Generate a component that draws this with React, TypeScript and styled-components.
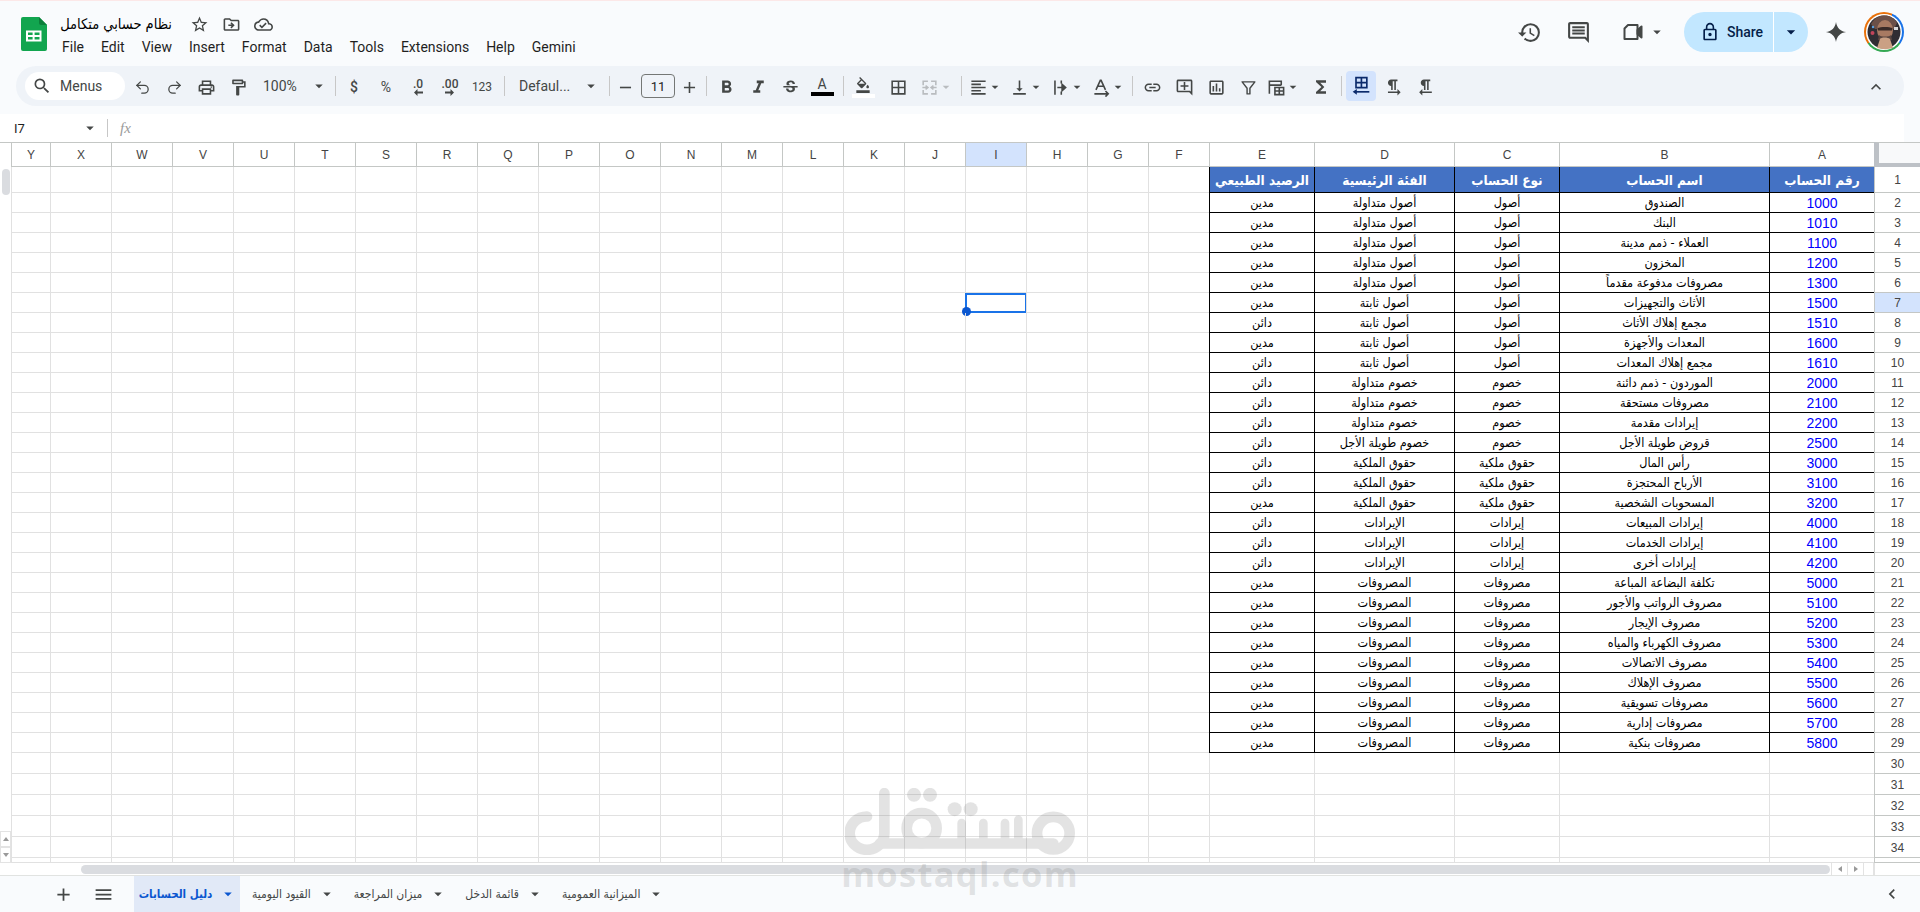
import React from "react";
import styled, { createGlobalStyle } from "styled-components";
import { Redo2, Undo2 } from "lucide-react";
import {
  MdAdd, MdArrowDropDown, MdBorderAll, MdChevronLeft, MdExpandLess, MdFormatAlignLeft, MdFormatBold,
  MdFormatColorFill, MdFormatItalic, MdFormatTextdirectionLToR, MdFormatTextdirectionRToL, MdFunctions,
  MdHistory, MdLink, MdLockOutline, MdMenu, MdOutlineAddComment, MdOutlineCloudDone, MdOutlineComment,
  MdOutlineDriveFileMove, MdOutlineFormatPaint, MdOutlineInsertChart, MdOutlinePrint, MdRemove,
  MdSearch, MdStarBorder, MdStrikethroughS, MdVerticalAlignBottom,
} from "react-icons/md";

const GlobalStyle = createGlobalStyle`
  html, body { margin: 0; padding: 0; height: 912px; overflow: hidden; background: #f9fbfd; }
  body { font-family: Roboto, "Liberation Sans", sans-serif; color: #1f1f1f; }
  * { box-sizing: border-box; }
`;

const ARABIC = `"DejaVu Sans Condensed", "DejaVu Sans", sans-serif`;
const GRID = "#e1e1e1";
const HEAD_LINE = "#c4c7c5";
const ICON = "#444746";

const Page = styled.div`position: relative; width: 1920px; height: 912px; display: flex; flex-direction: column; overflow: hidden;`;

const Header = styled.header`height: 66px; display: flex; border-top: 1px solid #fce8e8; padding: 16px 16px 0 21px;`;
const DocInfo = styled.div`margin-left: 15px; display: flex; flex-direction: column;`;
const TitleRow = styled.div`display: flex; align-items: center; height: 18px; margin-top: -2px;`;
const DocTitle = styled.div`width: 110px; font: 14.5px ${ARABIC}; direction: rtl; white-space: nowrap; color: #000; text-align: right;`;
const TitleIcon = styled.span`width: 32px; display: flex; justify-content: center; color: ${ICON}; font-size: 19px; &:first-of-type { margin-left: 11px; }`;
const MenuBar = styled.nav`display: flex; gap: 17px; margin-top: 4px; font-size: 14px; color: #1f1f1f; line-height: 20px;`;
const HeaderRight = styled.div`margin-left: auto; display: flex; align-items: center; height: 40px; margin-top: -5px;`;
const RoundIcon = styled.span<{ $w?: number; $ml?: number }>`width: ${(p) => p.$w ?? 40}px; margin-left: ${(p) => p.$ml ?? 0}px; display: flex; align-items: center; justify-content: center; color: ${ICON}; font-size: 25px;`;
const VideoGroup = styled.span`width: 70px; display: flex; align-items: center; justify-content: flex-end; gap: 3px; padding-right: 2px; color: ${ICON}; font-size: 18px;`;
const ShareButton = styled.div`width: 124px; height: 40px; margin-left: 16px; border-radius: 20px; background: #c2e7ff; display: flex; align-items: center; color: #041e49; font-size: 14px; font-weight: 500;`;
const ShareMain = styled.div`width: 90px; height: 100%; display: flex; align-items: center; padding-left: 16px; gap: 7px; border-right: 1px solid #fff; svg { font-size: 20px; }`;
const ShareDrop = styled.div`flex: 1; display: flex; justify-content: center; font-size: 20px;`;
const AvatarWrap = styled.div`width: 40px; height: 40px; border-radius: 50%; margin-left: 17px; padding: 2px; background: conic-gradient(#e8710a 0 25deg, #1a73e8 25deg 125deg, #34a853 125deg 235deg, #e8710a 235deg 360deg);`;

const Toolbar = styled.div`height: 40px; margin: 0 16px; padding: 0 12px 0 9px; background: #eff3f8; border-radius: 20px; display: flex; align-items: center; color: ${ICON};`;
const SearchPill = styled.div`width: 100px; height: 28px; background: #fff; border-radius: 14px; display: flex; align-items: center; padding-left: 7px; gap: 8px; font-size: 14px; color: #444746; svg { font-size: 20px; }`;
const Tool = styled.div<{ $w?: number; $ml?: number; $active?: boolean }>`
  width: ${(p) => p.$w ?? 32}px; height: ${(p) => (p.$active ? 30 : 28)}px; margin-left: ${(p) => p.$ml ?? 0}px; margin-top: ${(p) => (p.$active ? 0 : 2)}px; flex: none;
  display: flex; align-items: center; justify-content: center; font-size: 19px; color: ${(p) => (p.$active ? "#0b2a6b" : ICON)};
  background: ${(p) => (p.$active ? "#d3e3fd" : "transparent")}; border-radius: 4px;
`;
const ToolGroup = styled.div<{ $pl?: number }>`width: 41px; flex: none; margin-top: 2px; display: flex; align-items: center; padding-left: ${(p) => p.$pl ?? 3}px; font-size: 19px; color: ${ICON}; svg + svg { font-size: 16px; margin-left: -1px; }`;
const Sep = styled.div<{ $l: number; $r: number }>`width: 1px; height: 20px; flex: none; background: #c7c7c7; margin: 0 ${(p) => p.$r}px 0 ${(p) => p.$l}px;`;
const SelectTool = styled.div<{ $w: number }>`width: ${(p) => p.$w}px; flex: none; display: flex; align-items: center; justify-content: space-between; padding: 0 3px 0 9px; font-size: 14px; svg { font-size: 18px; flex: none; }`;
const SymbolText = styled.span<{ $s?: number; $b?: boolean }>`font-size: ${(p) => p.$s ?? 13}px; font-weight: ${(p) => (p.$b ? 500 : 400)}; color: ${ICON};`;
const SizeBox = styled.div`width: 34px; height: 24px; flex: none; border: 1px solid #747775; border-radius: 4px; display: flex; align-items: center; justify-content: center; font-size: 13px; color: #1f1f1f;`;
const StackIcon = styled.div`display: flex; flex-direction: column; align-items: center; line-height: 10px; font-size: 12px; font-weight: 500; color: ${ICON};`;
const ColorBar = styled.div<{ $c: string }>`width: 23px; height: 4px; background: ${(p) => p.$c}; margin-top: 1px;`;
const ColorTool = styled.div`display: flex; flex-direction: column; align-items: center; font-size: 14px; line-height: 13px; color: ${ICON};`;
const Caret = styled(Tool)`margin-left: auto; font-size: 20px;`;

const FormulaWrap = styled.div`height: 36px; padding: 8px 16px 0 0;`;
const FormulaBar = styled.div`height: 28px; background: #fff; display: flex; align-items: center; color: #444746;`;
const CellName = styled.div`width: 107px; padding-left: 14px; display: flex; align-items: center; justify-content: space-between; padding-right: 8px; font-size: 13px; color: #1f1f1f; svg { font-size: 18px; color: ${ICON}; }`;
const FormulaDivider = styled.div`width: 1px; height: 18px; background: #c7c7c7;`;
const Fx = styled.div`margin-left: 12px; font: italic 15px "Liberation Serif", serif; color: #9a9a9a;`;

const SheetArea = styled.div`height: 721px; display: flex; background: #fff;`;
const VScroll = styled.div`width: 11px; flex: none; display: flex; flex-direction: column; align-items: center; border-top: 1px solid ${HEAD_LINE};`;
const VThumb = styled.div`width: 8px; height: 26px; margin-top: 26px; background: #dadce0; border-radius: 4px;`;
const VArrow = styled.div<{ $top?: boolean }>`
  width: 11px; height: 16px; border: 1px solid #e3e3e3; display: flex; align-items: center; justify-content: center; margin-top: ${(p) => (p.$top ? "auto" : "0")};
  &::before { content: ""; border: 3px solid transparent; ${(p) => (p.$top ? "border-bottom: 4px solid #9a9a9a; margin-top: -3px;" : "border-top: 4px solid #9a9a9a; margin-top: 3px;")} }
`;
const Grid = styled.div`width: 1909px; display: flex; flex-direction: column;`;
const TEMPLATE = `39px repeat(19, 61px) 105px 140px 105px 210px 105px 46px`;
const Row = styled.div<{ $h: number }>`display: grid; grid-template-columns: ${TEMPLATE}; height: ${(p) => p.$h}px; flex: none;`;
const ColHead = styled.div<{ $sel?: boolean }>`
  display: flex; align-items: center; justify-content: center; font: 12px "Liberation Sans", sans-serif; color: #444;
  background: ${(p) => (p.$sel ? "#d3e3fd" : "#fff")}; border-top: 1px solid ${HEAD_LINE}; border-left: 1px solid ${HEAD_LINE}; border-bottom: 1px solid ${HEAD_LINE};
`;
const Corner = styled.div`background: #f8f9fa; border-left: 5px solid #bdc1c6; border-bottom: 4px solid #bdc1c6; border-top: 1px solid ${HEAD_LINE};`;
const RowHead = styled.div<{ $sel?: boolean }>`
  display: flex; align-items: center; justify-content: center; font: 12px "Liberation Sans", sans-serif; color: #444; padding-top: 1px;
  background: ${(p) => (p.$sel ? "#d3e3fd" : "#fff")}; border-left: 1px solid ${HEAD_LINE}; border-bottom: 1px solid ${HEAD_LINE};
`;
const Cell = styled.div`position: relative; border-left: 1px solid ${GRID}; border-bottom: 1px solid ${GRID};`;
const TableCell = styled.div`
  display: flex; align-items: center; justify-content: center; direction: rtl; white-space: nowrap; overflow: hidden;
  font: 12.5px ${ARABIC}; color: #000; border-left: 1px solid #000; border-bottom: 1px solid #000;
`;
const TableHead = styled(TableCell)`background: #4472c4; color: #fff; font-weight: 700; font-size: 13.5px;`;
const AccountNo = styled(TableCell)`font: 14px "Liberation Sans", sans-serif; color: #0000ff; direction: ltr;`;
const Selection = styled.div`position: absolute; inset: 0 -1px -1px -1px; border: 2px solid #1a73e8; pointer-events: none;
  &::after { content: ""; position: absolute; left: -5px; bottom: -5px; width: 9px; height: 9px; border-radius: 50%; background: #0b57d0; }
`;

const HScrollRow = styled.div`height: 12px; display: flex; align-items: center; background: #fff; padding-left: 81px;`;
const HThumb = styled.div`width: 1749px; height: 9px; background: #dadce0; border-radius: 5px;`;
const HArrows = styled.div`margin-left: 1px; width: 34px; display: flex; height: 12px; border-left: 1px solid #e3e3e3;`;
const HArrow = styled.div<{ $left?: boolean }>`
  width: 16px; display: flex; align-items: center; justify-content: center; border-right: 1px solid #e3e3e3;
  &::before { content: ""; border: 3px solid transparent; ${(p) => (p.$left ? "border-right: 4px solid #9a9a9a; margin-left: -3px;" : "border-left: 4px solid #9a9a9a; margin-left: 3px;")} }
`;
const HEnd = styled.div`margin-left: 8px; width: 2px; height: 12px; background: #e3e3e3;`;

const TabBar = styled.div`height: 37px; display: flex; align-items: stretch; background: #f9fbfd; border-top: 1px solid #e1e3e1; padding-left: 43px; color: ${ICON};`;
const BarIcon = styled.div`width: 40px; display: flex; align-items: center; justify-content: center; font-size: 21px; color: #444746;`;
const TabGap = styled.div`width: 11px;`;
const Tab = styled.div<{ $active?: boolean }>`
  display: flex; align-items: center; justify-content: center; gap: 7px; flex: none; width: ${(p) => (p.$active ? "106px" : "auto")}; padding: 0 6px 0 ${(p) => (p.$active ? 8 : 12)}px;
  background: ${(p) => (p.$active ? "#e1e9f7" : "transparent")}; color: ${(p) => (p.$active ? "#0b57d0" : "#444746")};
  font: ${(p) => (p.$active ? 700 : 400)} ${(p) => (p.$active ? 11.5 : 12)}px ${ARABIC}; white-space: nowrap; svg { font-size: 18px; flex: none; }
`;
const TabLabel = styled.span`direction: rtl;`;
const Collapse = styled.div`margin-left: auto; width: 56px; display: flex; align-items: center; justify-content: center; font-size: 20px; color: #444746;`;

const Watermark = styled.div`position: absolute; left: 845px; top: 788px; width: 230px; display: flex; flex-direction: column; align-items: center; pointer-events: none;`;
const WatermarkText = styled.div`font: 700 34.5px/34px "Open Sans", sans-serif; letter-spacing: 1.3px; color: rgba(120, 120, 120, 0.2); margin-top: 2px; white-space: nowrap;`;

const SheetsLogo = () => (
  <svg width="26" height="34" viewBox="0 0 26 34" style={{ flex: "none" }}>
    <path d="M2 0h16l8 8v24a2 2 0 0 1-2 2H2a2 2 0 0 1-2-2V2a2 2 0 0 1 2-2z" fill="#12a54f" />
    <path d="M18 0l8 8h-6a2 2 0 0 1-2-2z" fill="#0b7f3a" />
    <path d="M5 13.500h15.500v11H5z" fill="#fff" />
    <path d="M7 15.500h4.600v2.600H7zM13.600 15.500h4.900v2.600h-4.900zM7 20h4.600v2.600H7zM13.600 20h4.900v2.600h-4.900z" fill="#12a54f" />
  </svg>
);

const Gemini = () => (
  <svg width="22" height="22" viewBox="0 0 24 24" style={{ marginLeft: 17, flex: "none" }}>
    <path d="M12 1c.8 6.2 4.8 10.200 11 11-6.200.8-10.200 4.800-11 11-.8-6.200-4.800-10.200-11-11 6.200-.8 10.200-4.800 11-11z" fill="#444746" />
  </svg>
);

const Avatar = () => (
  <svg width="36" height="36" viewBox="0 0 36 36" style={{ display: "block" }}>
    <circle cx="18" cy="18" r="18" fill="#fff" />
    <circle cx="18" cy="18" r="16.500" fill="#2f2d33" />
    <path d="M5 10C9 3 14 1.500 19 1.500S28 4 31 9l-3 6H9z" fill="#6b5048" />
    <ellipse cx="19" cy="16" rx="8" ry="10" fill="#a87a62" />
    <path d="M11.500 14c3-1.500 12-1.500 15 0l-.5 2.500h-14z" fill="#3a2b28" />
    <path d="M13 21c2 2 10 2 12 0l1 5H12z" fill="#5a4640" />
    <path d="M11 34l3-9c1-2 8-2 10 0l3 9c-5 1.500-11 1.500-16 0z" fill="#caa084" />
    <circle cx="6.500" cy="19" r="2" fill="#c2445a" />
    <circle cx="7" cy="13" r="1.200" fill="#5aa0e0" />
    <path d="M28 13h4v3h-4z" fill="#d8d8d8" />
  </svg>
);

const Video = () => (
  <svg width="24" height="24" viewBox="0 0 24 24" fill="none" stroke="#444746" strokeWidth="2" strokeLinejoin="round">
    <path d="M7 5h9.500v14H3.500V8.500z" />
    <path d="M16.500 10l4-3.500v11l-4-3.500z" fill="#444746" />
  </svg>
);

const Merge = () => (
  <svg width="19" height="19" viewBox="0 0 24 24" fill="none" stroke="#b9bcbf" strokeWidth="2">
    <path d="M4 9V4h6M20 9V4h-6M4 15v5h6M20 15v5h-6M3 12h6M21 12h-6" />
    <path d="M7 9.500L10 12l-3 2.500M17 9.500L14 12l3 2.500" />
  </svg>
);

const Wrap = () => (
  <svg width="19" height="19" viewBox="0 0 24 24" fill="none" stroke="#444746" strokeWidth="2">
    <path d="M5 3v18M13 3v4M13 17v4M8 12h9" />
    <path d="M14 8l4.500 4-4.500 4z" fill="#444746" />
  </svg>
);

const Rotate = () => (
  <svg width="19" height="19" viewBox="0 0 24 24" fill="none" stroke="#444746" strokeWidth="2">
    <path d="M5 15L10.500 3h1L17 15M7 10.500h8M3 20h17M17 16.500l3.500 3.500-3.500 3.500" />
  </svg>
);

const Filter = () => (
  <svg width="17" height="17" viewBox="0 0 24 24" fill="none" stroke="#444746" strokeWidth="2" strokeLinejoin="round">
    <path d="M3 4h18l-7 9v8h-4v-8z" />
  </svg>
);

const TableIcon = () => (
  <svg width="19" height="19" viewBox="0 0 24 24" fill="none" stroke="#444746" strokeWidth="2">
    <path d="M3 20V4h15v5M3 9h15" />
    <path d="M10 12h11v9H10zM15.500 12v9M10 16.500h11" />
  </svg>
);

const RtlGrid = () => (
  <svg width="20" height="20" viewBox="0 0 24 24" fill="none" stroke="#0b2a6b" strokeWidth="2">
    <path d="M6 2h13v12H6zM12.500 2v12M6 8h13" />
    <path d="M22 19H5" />
    <path d="M7 15.500v7L2 19z" fill="#0b2a6b" stroke="none" />
  </svg>
);

const SmallArrow = ({ left }: { left?: boolean }) => (
  <svg width="9" height="7" viewBox="0 0 9 7" fill="#444746">
    {left ? <path d="M0 3.500L3.500 0v2.500H9v2H3.500V7z" /> : <path d="M9 3.500L5.500 0v2.500H0v2h5.500V7z" />}
  </svg>
);

const LogoMark = () => (
  <svg width="230" height="67" viewBox="195 145 690 200" role="img" aria-label="mostaql" opacity="0.2">
    <g fill="none" stroke="#787878" strokeWidth="32" strokeLinecap="round" strokeLinejoin="round">
      <path d="M313 160V280a52 50 0 0 1-104 0a52 50 0 0 1 52-50" />
      <circle cx="425" cy="265" r="45" />
      <path d="M300 311H820" />
      <path d="M545 250v60M610 250v60M675 250v60M715 240v70" strokeWidth="26" />
      <circle cx="820" cy="280" r="49" />
    </g>
    <g fill="#787878">
      <circle cx="402" cy="165" r="21" />
      <circle cx="450" cy="165" r="21" />
      <circle cx="524" cy="208" r="21" />
      <circle cx="572" cy="208" r="21" />
    </g>
  </svg>
);

const COLS = "YXWVUTSRQPONMLKJIHGFEDCBA".split("");
const BLANK_COLS = 20;
const SEL_COL = 16;

type Account = [string, string, string, string, string];
const ASSET_C = "أصول متداولة";
const ASSET_F = "أصول ثابتة";
const LIAB_C = "خصوم متداولة";
const EQ = "حقوق الملكية";
const REV = "الإيرادات";
const EXP = "المصروفات";

const ACCOUNTS: Account[] = [
  ["1000", "الصندوق", "أصول", ASSET_C, "مدين"],
  ["1010", "البنك", "أصول", ASSET_C, "مدين"],
  ["1100", "العملاء - ذمم مدينة", "أصول", ASSET_C, "مدين"],
  ["1200", "المخزون", "أصول", ASSET_C, "مدين"],
  ["1300", "مصروفات مدفوعة مقدماً", "أصول", ASSET_C, "مدين"],
  ["1500", "الأثاث والتجهيزات", "أصول", ASSET_F, "مدين"],
  ["1510", "مجمع إهلاك الأثاث", "أصول", ASSET_F, "دائن"],
  ["1600", "المعدات والأجهزة", "أصول", ASSET_F, "مدين"],
  ["1610", "مجمع إهلاك المعدات", "أصول", ASSET_F, "دائن"],
  ["2000", "الموردون - ذمم دائنة", "خصوم", LIAB_C, "دائن"],
  ["2100", "مصروفات مستحقة", "خصوم", LIAB_C, "دائن"],
  ["2200", "إيرادات مقدمة", "خصوم", LIAB_C, "دائن"],
  ["2500", "قروض طويلة الأجل", "خصوم", "خصوم طويلة الأجل", "دائن"],
  ["3000", "رأس المال", "حقوق ملكية", EQ, "دائن"],
  ["3100", "الأرباح المحتجزة", "حقوق ملكية", EQ, "دائن"],
  ["3200", "المسحوبات الشخصية", "حقوق ملكية", EQ, "مدين"],
  ["4000", "إيرادات المبيعات", "إيرادات", REV, "دائن"],
  ["4100", "إيرادات الخدمات", "إيرادات", REV, "دائن"],
  ["4200", "إيرادات أخرى", "إيرادات", REV, "دائن"],
  ["5000", "تكلفة البضاعة المباعة", "مصروفات", EXP, "مدين"],
  ["5100", "مصروف الرواتب والأجور", "مصروفات", EXP, "مدين"],
  ["5200", "مصروف الإيجار", "مصروفات", EXP, "مدين"],
  ["5300", "مصروف الكهرباء والمياه", "مصروفات", EXP, "مدين"],
  ["5400", "مصروف الاتصالات", "مصروفات", EXP, "مدين"],
  ["5500", "مصروف الإهلاك", "مصروفات", EXP, "مدين"],
  ["5600", "مصروفات تسويقية", "مصروفات", EXP, "مدين"],
  ["5700", "مصروفات إدارية", "مصروفات", EXP, "مدين"],
  ["5800", "مصروفات بنكية", "مصروفات", EXP, "مدين"],
];

const HEADINGS = ["الرصيد الطبيعي", "الفئة الرئيسية", "نوع الحساب", "اسم الحساب", "رقم الحساب"];
const MENUS = ["File", "Edit", "View", "Insert", "Format", "Data", "Tools", "Extensions", "Help", "Gemini"];
const TABS = ["دليل الحسابات", "القيود اليومية", "ميزان المراجعة", "قائمة الدخل", "الميزانية العمومية"];

const BlankCells = ({ row }: { row: number }) => (
  <>
    {Array.from({ length: BLANK_COLS }, (_, c) => (
      <Cell key={c}>{row === 7 && c === SEL_COL && <Selection />}</Cell>
    ))}
  </>
);

const SheetRows = () => {
  const rows = [];
  rows.push(
    <Row key={1} $h={26}>
      <BlankCells row={1} />
      {HEADINGS.map((h) => <TableHead key={h}>{h}</TableHead>)}
      <RowHead>1</RowHead>
    </Row>
  );
  ACCOUNTS.forEach((a, i) => {
    const n = i + 2;
    rows.push(
      <Row key={n} $h={20}>
        <BlankCells row={n} />
        <TableCell>{a[4]}</TableCell>
        <TableCell>{a[3]}</TableCell>
        <TableCell>{a[2]}</TableCell>
        <TableCell>{a[1]}</TableCell>
        <AccountNo>{a[0]}</AccountNo>
        <RowHead $sel={n === 7}>{n}</RowHead>
      </Row>
    );
  });
  for (let n = 30; n <= 34; n++) {
    rows.push(
      <Row key={n} $h={21}>
        <BlankCells row={n} />
        {COLS.slice(BLANK_COLS).map((c) => <Cell key={c} />)}
        <RowHead>{n}</RowHead>
      </Row>
    );
  }
  rows.push(
    <Row key={35} $h={5}>
      <BlankCells row={35} />
      {COLS.slice(BLANK_COLS).map((c) => <Cell key={c} />)}
      <RowHead />
    </Row>
  );
  return <>{rows}</>;
};

export default function App() {
  return (
    <Page>
      <GlobalStyle />
      <Header>
        <SheetsLogo />
        <DocInfo>
          <TitleRow>
            <DocTitle>نظام حسابي متكامل</DocTitle>
            <TitleIcon><MdStarBorder /></TitleIcon>
            <TitleIcon><MdOutlineDriveFileMove /></TitleIcon>
            <TitleIcon><MdOutlineCloudDone /></TitleIcon>
          </TitleRow>
          <MenuBar>{MENUS.map((m) => <span key={m}>{m}</span>)}</MenuBar>
        </DocInfo>
        <HeaderRight>
          <RoundIcon><MdHistory /></RoundIcon>
          <RoundIcon $ml={9}><MdOutlineComment /></RoundIcon>
          <VideoGroup><Video /><MdArrowDropDown /></VideoGroup>
          <ShareButton>
            <ShareMain><MdLockOutline />Share</ShareMain>
            <ShareDrop><MdArrowDropDown /></ShareDrop>
          </ShareButton>
          <Gemini />
          <AvatarWrap><Avatar /></AvatarWrap>
        </HeaderRight>
      </Header>

      <Toolbar>
        <SearchPill><MdSearch />Menus</SearchPill>
        <Tool $ml={1}><Undo2 size={17} strokeWidth={1.8} /></Tool>
        <Tool><Redo2 size={17} strokeWidth={1.8} /></Tool>
        <Tool><MdOutlinePrint /></Tool>
        <Tool><MdOutlineFormatPaint /></Tool>
        <SelectTool $w={77}>100%<MdArrowDropDown /></SelectTool>
        <Sep $l={4} $r={2} />
        <Tool><SymbolText $s={14} $b>$</SymbolText></Tool>
        <Tool><SymbolText $s={14}>%</SymbolText></Tool>
        <Tool><StackIcon>.0<SmallArrow left /></StackIcon></Tool>
        <Tool><StackIcon>.00<SmallArrow /></StackIcon></Tool>
        <Tool><SymbolText $s={12}>123</SymbolText></Tool>
        <Sep $l={6} $r={5} />
        <SelectTool $w={93}>Defaul...<MdArrowDropDown /></SelectTool>
        <Sep $l={6} $r={0} />
        <Tool $w={31}><MdRemove /></Tool>
        <SizeBox>11</SizeBox>
        <Tool $w={28}><MdAdd /></Tool>
        <Sep $l={3} $r={3} />
        <Tool><MdFormatBold size={21} /></Tool>
        <Tool><MdFormatItalic size={21} /></Tool>
        <Tool><MdStrikethroughS /></Tool>
        <Tool><ColorTool>A<ColorBar $c="#000" /></ColorTool></Tool>
        <Sep $l={5} $r={3} />
        <Tool><ColorTool><MdFormatColorFill size={16} /><ColorBar $c="#fff" /></ColorTool></Tool>
        <Tool $ml={3}><MdBorderAll /></Tool>
        <ToolGroup $pl={6}><Merge /><MdArrowDropDown color="#b9bcbf" /></ToolGroup>
        <Sep $l={6} $r={4} />
        <ToolGroup><MdFormatAlignLeft /><MdArrowDropDown /></ToolGroup>
        <ToolGroup><MdVerticalAlignBottom /><MdArrowDropDown /></ToolGroup>
        <ToolGroup><Wrap /><MdArrowDropDown /></ToolGroup>
        <ToolGroup><Rotate /><MdArrowDropDown /></ToolGroup>
        <Sep $l={2} $r={3} />
        <Tool><MdLink /></Tool>
        <Tool><MdOutlineAddComment /></Tool>
        <Tool><MdOutlineInsertChart /></Tool>
        <Tool><Filter /></Tool>
        <ToolGroup><TableIcon /><MdArrowDropDown /></ToolGroup>
        <Tool><MdFunctions size={20} /></Tool>
        <Sep $l={4} $r={4} />
        <Tool $w={30} $active><RtlGrid /></Tool>
        <Tool $w={30} $ml={2}><MdFormatTextdirectionLToR /></Tool>
        <Tool $w={30} $ml={2}><MdFormatTextdirectionRToL /></Tool>
        <Caret><MdExpandLess /></Caret>
      </Toolbar>

      <FormulaWrap>
        <FormulaBar>
          <CellName>I7<MdArrowDropDown /></CellName>
          <FormulaDivider />
          <Fx>fx</Fx>
        </FormulaBar>
      </FormulaWrap>

      <SheetArea>
        <VScroll>
          <VThumb />
          <VArrow $top />
          <VArrow />
        </VScroll>
        <Grid>
          <Row $h={25}>
            {COLS.map((c, i) => <ColHead key={c} $sel={i === SEL_COL}>{c}</ColHead>)}
            <Corner />
          </Row>
          <SheetRows />
        </Grid>
      </SheetArea>

      <HScrollRow>
        <HThumb />
        <HArrows>
          <HArrow $left />
          <HArrow />
        </HArrows>
        <HEnd />
      </HScrollRow>

      <TabBar>
        <BarIcon><MdAdd /></BarIcon>
        <BarIcon><MdMenu /></BarIcon>
        <TabGap />
        {TABS.map((t, i) => (
          <Tab key={t} $active={i === 0}>
            <TabLabel>{t}</TabLabel>
            <MdArrowDropDown />
          </Tab>
        ))}
        <Collapse><MdChevronLeft /></Collapse>
      </TabBar>

      <Watermark>
        <LogoMark />
        <WatermarkText>mostaql.com</WatermarkText>
      </Watermark>
    </Page>
  );
}
